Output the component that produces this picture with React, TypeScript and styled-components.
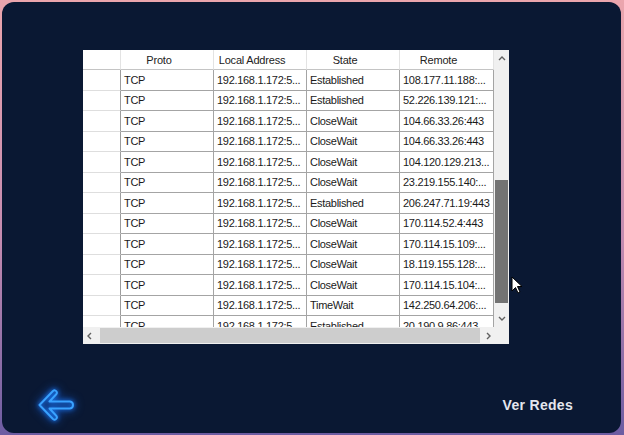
import React from "react";
import styled, { createGlobalStyle } from "styled-components";

const Global = createGlobalStyle`
  html, body { margin: 0; padding: 0; }
  body {
    width: 624px; height: 435px; overflow: hidden;
    background: linear-gradient(180deg, #eba5ad 0%, #c48bb0 55%, #6c5ca2 100%);
    font-family: "Liberation Sans", Arial, sans-serif;
  }
`;

const Panel = styled.div`
  position: relative;
  margin: 2px 3px 0 2px;
  height: 431px;
  border-radius: 12px;
  background: #0a1833;
  display: flex;
  flex-direction: column;
  box-sizing: border-box;
  padding: 48px 0 0 81px;
`;

const Table = styled.div`
  width: 426px;
  height: 294px;
  background: #ffffff;
  display: grid;
  grid-template-columns: 411px 15px;
  grid-template-rows: 277px 17px;
`;

const Viewport = styled.div`
  overflow: hidden;
  display: flex;
  flex-direction: column;
`;

const COLS = "38px 93px 93px 93px 94px";

const HeaderRow = styled.div`
  display: grid;
  grid-template-columns: ${COLS};
  height: 20px;
  flex: none;
`;

const HeaderCell = styled.div`
  box-sizing: border-box;
  border-right: 1px solid #e3e3e3;
  border-bottom: 1px solid #c4c4c4;
  font-size: 11px;
  color: #222;
  display: flex;
  align-items: center;
  justify-content: center;
  padding-right: 16px;
  letter-spacing: -0.2px;
`;

const Row = styled.div`
  display: grid;
  grid-template-columns: ${COLS};
  height: 20.5px;
  flex: none;
`;

const RowHead = styled.div`
  box-sizing: border-box;
  border-right: 1px solid #9c9c9c;
  border-bottom: 1px solid #dedede;
`;

const Cell = styled.div`
  box-sizing: border-box;
  border-right: 1px solid #a4a4a4;
  border-bottom: 1px solid #a4a4a4;
  font-size: 11px;
  color: #1a1a1a;
  padding-left: 3px;
  display: flex;
  align-items: center;
  white-space: nowrap;
  overflow: hidden;
  letter-spacing: -0.3px;
`;

const VScroll = styled.div`
  background: #f0f0f0;
  display: flex;
  flex-direction: column;
  align-items: center;
`;

const HScroll = styled.div`
  background: #f0f0f0;
  display: flex;
  align-items: center;
`;

const Corner = styled.div`
  background: #f0f0f0;
`;

const ArrowBox = styled.div<{ $w: number; $h: number }>`
  width: ${(p) => p.$w}px;
  height: ${(p) => p.$h}px;
  display: flex;
  align-items: center;
  justify-content: center;
  flex: none;
`;

const VTrack = styled.div`
  flex: 1;
  width: 100%;
  display: flex;
  justify-content: center;
`;

const VThumb = styled.div<{ $top: number; $len: number }>`
  margin-top: ${(p) => p.$top}px;
  width: 13px;
  height: ${(p) => p.$len}px;
  background: #737373;
`;

const HTrack = styled.div`
  flex: 1;
  height: 100%;
  display: flex;
  align-items: center;
`;

const HThumb = styled.div<{ $left: number; $len: number }>`
  margin-left: ${(p) => p.$left}px;
  height: 15px;
  width: ${(p) => p.$len}px;
  background: #cdcdcd;
`;

const Footer = styled.div`
  margin-top: auto;
  margin-left: -81px;
  height: 56px;
  display: flex;
  align-items: center;
  justify-content: space-between;
  padding: 0 48px 0 34px;
`;

const BackButton = styled.div`
  width: 40px;
  height: 40px;
  display: flex;
  align-items: center;
  justify-content: center;
  svg { filter: drop-shadow(0 0 2px #1a7dff) drop-shadow(0 0 4px #1560d8); }
`;

const NavText = styled.div`
  font-family: "Liberation Sans", Arial, sans-serif;
  font-weight: bold;
  font-size: 14px;
  letter-spacing: 0.3px;
  color: #e4e6ee;
`;

const Cursor = styled.div`
  position: absolute;
  left: 509px;
  top: 274px;
  width: 12px;
  height: 18px;
`;

const rows: string[][] = [
  ["TCP", "192.168.1.172:5...", "Established", "108.177.11.188:..."],
  ["TCP", "192.168.1.172:5...", "Established", "52.226.139.121:..."],
  ["TCP", "192.168.1.172:5...", "CloseWait", "104.66.33.26:443"],
  ["TCP", "192.168.1.172:5...", "CloseWait", "104.66.33.26:443"],
  ["TCP", "192.168.1.172:5...", "CloseWait", "104.120.129.213..."],
  ["TCP", "192.168.1.172:5...", "CloseWait", "23.219.155.140:..."],
  ["TCP", "192.168.1.172:5...", "Established", "206.247.71.19:443"],
  ["TCP", "192.168.1.172:5...", "CloseWait", "170.114.52.4:443"],
  ["TCP", "192.168.1.172:5...", "CloseWait", "170.114.15.109:..."],
  ["TCP", "192.168.1.172:5...", "CloseWait", "18.119.155.128:..."],
  ["TCP", "192.168.1.172:5...", "CloseWait", "170.114.15.104:..."],
  ["TCP", "192.168.1.172:5...", "TimeWait", "142.250.64.206:..."],
  ["TCP", "192.168.1.172:5...", "Established", "20.190.9.86:443"],
];

const Chevron = ({ dir }: { dir: "up" | "down" | "left" | "right" }) => {
  const pts: Record<string, string> = {
    up: "1,5 4,2 7,5",
    down: "1,2 4,5 7,2",
    left: "5,1 2,4 5,7",
    right: "2,1 5,4 2,7",
  };
  return (
    <svg width="8" height="8" viewBox="0 0 8 8">
      <polyline points={pts[dir]} fill="none" stroke="#606060" strokeWidth="1.4" />
    </svg>
  );
};

export default function App() {
  return (
    <>
      <Global />
      <Panel>
        <Table>
          <Viewport>
            <HeaderRow>
              <HeaderCell />
              <HeaderCell>Proto</HeaderCell>
              <HeaderCell>Local Address</HeaderCell>
              <HeaderCell>State</HeaderCell>
              <HeaderCell>Remote</HeaderCell>
            </HeaderRow>
            {rows.map((r, i) => (
              <Row key={i}>
                <RowHead />
                {r.map((c, j) => (
                  <Cell key={j}>{c}</Cell>
                ))}
              </Row>
            ))}
          </Viewport>
          <VScroll>
            <ArrowBox $w={15} $h={17}>
              <Chevron dir="up" />
            </ArrowBox>
            <VTrack>
              <VThumb $top={113} $len={123} />
            </VTrack>
            <ArrowBox $w={15} $h={17}>
              <Chevron dir="down" />
            </ArrowBox>
          </VScroll>
          <HScroll>
            <ArrowBox $w={14} $h={17}>
              <Chevron dir="left" />
            </ArrowBox>
            <HTrack>
              <HThumb $left={3} $len={380} />
            </HTrack>
            <ArrowBox $w={17} $h={17}>
              <Chevron dir="right" />
            </ArrowBox>
          </HScroll>
          <Corner />
        </Table>
        <Footer>
          <BackButton>
            <svg width="38" height="38" viewBox="0 0 38 38">
              <path
                d="M2.5 19 L16 5 Q18 3.5 19.5 5.5 Q20.5 7 19 8.5 L12.5 15.5 L33 15.5 Q36 16 36 19 Q36 22 33 22.5 L12.5 22.5 L19 29.5 Q20.5 31 19.5 32.5 Q18 34.5 16 33 Z"
                fill="none"
                stroke="#39a2ff"
                strokeWidth="2"
                strokeLinejoin="round"
              />
            </svg>
          </BackButton>
          <NavText>Ver Redes</NavText>
        </Footer>
        <Cursor>
          <svg width="12" height="18" viewBox="0 0 12 18">
            <path d="M1 1 L1 15 L4.5 11.5 L7 17 L9 16 L6.5 10.5 L11 10.5 Z" fill="#ffffff" stroke="#000" strokeWidth="1" />
          </svg>
        </Cursor>
      </Panel>
    </>
  );
}
